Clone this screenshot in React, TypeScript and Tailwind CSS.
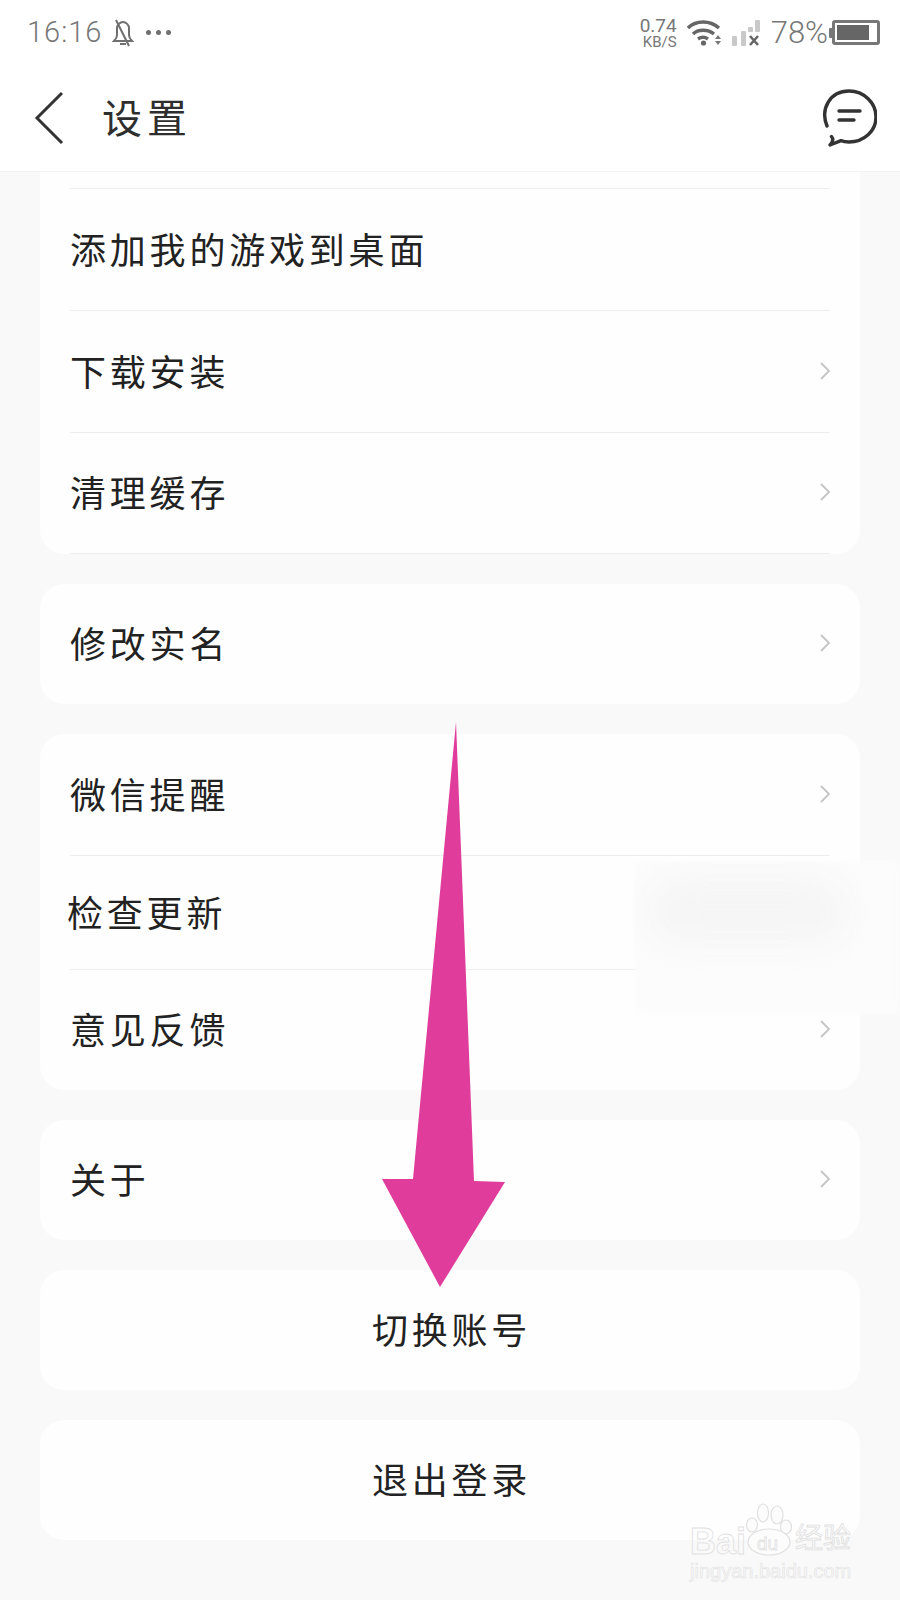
const Chevron = () => (
  <svg width="12" height="20" viewBox="0 0 12 20" fill="none" stroke="#c4c4c4" strokeWidth="1.8" className="mr-[-1px] mb-[2px]">
    <path d="M2 2l8 8-8 8" />
  </svg>
);

const Row = ({ label, arrow = true, top = true, className = "h-[122px]" }: { label: string; arrow?: boolean; top?: boolean; className?: string }) => (
  <div className={`flex items-center justify-between mx-[30px] border-[#ededed] ${top ? "border-t-[1.5px]" : ""} ${className}`}>
    <span className="mb-[4px] text-[36px] tracking-[3.8px] text-[#222]">{label}</span>
    {arrow && <Chevron />}
  </div>
);

const Button = ({ label }: { label: string }) => (
  <div className="h-[120px] bg-[#fefefe] rounded-[24px] flex items-center justify-center">
    <span className="ml-[3px] mb-[4px] text-[36px] tracking-[3.8px] text-[#222]">{label}</span>
  </div>
);

const StatusBar = () => (
  <div className="h-[65px] flex items-center justify-between pl-[27px] pr-[20px] text-[#777] font-['Roboto',sans-serif]">
    <div className="flex items-center">
      <span className="text-[29px] font-light tracking-[1px] leading-none">16:16</span>
      <svg width="22" height="28" viewBox="0 0 22 28" fill="none" stroke="#6f6f6f" strokeWidth="2" className="ml-[10px]">
        <path d="M2 22c2-2 3-3 3-6V9c0-3 3-6 6-6s6 3 6 6v7c0 3 1 4 3 6z" />
        <path d="M8 25h6M4 1l13 26" />
      </svg>
      <div className="flex gap-[5px] ml-[12px]">
        <span className="w-[5px] h-[5px] rounded-full bg-[#6f6f6f]" />
        <span className="w-[5px] h-[5px] rounded-full bg-[#6f6f6f]" />
        <span className="w-[5px] h-[5px] rounded-full bg-[#6f6f6f]" />
      </div>
    </div>
    <div className="flex items-center">
      <div className="flex flex-col items-end gap-[2px]">
        <span className="text-[19px] leading-[17px]">0.74</span>
        <span className="text-[15px] leading-[13px]">KB/S</span>
      </div>
      <svg width="36" height="28" viewBox="0 0 36 28" fill="none" stroke="#666" strokeWidth="3.4" className="ml-[10px]">
        <path d="M1 9c8-8 22-8 31 0" />
        <path d="M6 15c5-5 15-5 21 0" />
        <path d="M11 20c3-2 7-2 10 0" />
        <circle cx="16.5" cy="24" r="2.6" fill="#666" stroke="none" />
        <path d="M31 16l-3 4h6zM31 26l-3-4h6z" fill="#777" stroke="none" />
      </svg>
      <svg width="28" height="26" viewBox="0 0 28 26" className="ml-[9px]">
        <rect x="0" y="16" width="5" height="10" rx="1" fill="#c9c9c9" />
        <rect x="9" y="11" width="5" height="15" rx="1" fill="#c9c9c9" />
        <rect x="16" y="7" width="5" height="5" rx="1" fill="#c9c9c9" />
        <rect x="23" y="0" width="5" height="12" rx="1" fill="#c9c9c9" />
        <path d="M18 16l8 9M26 16l-8 9" stroke="#666" strokeWidth="2.6" />
      </svg>
      <span className="text-[31px] font-light leading-none ml-[11px]">78%</span>
      <div className="flex items-center ml-[1px]">
        <span className="w-[3px] h-[10px] bg-[#777] rounded-l-[1px]" />
        <div className="w-[48px] h-[25px] rounded-[3px] border-[3px] border-[#777] p-[2px]">
          <div className="w-[32px] h-full bg-[#666]" />
        </div>
      </div>
    </div>
  </div>
);

const Watermark = () => (
  <div className="absolute left-[690px] top-[1503px] w-[170px] h-[80px] text-transparent [-webkit-text-stroke:0.8px_#e0e0e0] font-['Liberation_Sans',sans-serif]">
    <span className="absolute left-0 top-[21px] text-[36px] font-bold leading-none">Bai</span>
    <svg width="50" height="54" viewBox="0 0 50 54" fill="#fcfcfc" stroke="#e0e0e0" strokeWidth="1.2" className="absolute left-[55px] top-0">
      <ellipse cx="7" cy="22" rx="5.500" ry="7" />
      <ellipse cx="18" cy="10" rx="5.500" ry="9" />
      <ellipse cx="32" cy="12" rx="6" ry="9" />
      <ellipse cx="41" cy="24" rx="5.500" ry="7" />
      <ellipse cx="24" cy="39" rx="21" ry="13" />
    </svg>
    <span className="absolute left-[67px] top-[31px] text-[19px] leading-none">du</span>
    <span className="absolute left-[105px] top-[19px] text-[28px] leading-none font-['Noto_Sans_CJK_SC',sans-serif]">经验</span>
    <span className="absolute left-0 top-[58px] text-[20px] leading-none whitespace-nowrap [-webkit-text-stroke:0.6px_#e2e2e2]">jingyan.baidu.com</span>
  </div>
);

export default function App() {
  return (
    <div className="relative w-[900px] h-[1600px] overflow-hidden bg-[#f9f9f9] font-['Noto_Sans_CJK_SC',sans-serif]">
      <header className="h-[172px] bg-white border-b border-[#f2f2f2]">
        <StatusBar />
        <div className="h-[105px] flex items-center justify-between pl-[34px] pr-[23px]">
          <div className="flex items-center">
            <svg width="30" height="54" viewBox="0 0 30 54" fill="none" stroke="#333" strokeWidth="3">
              <path d="M28 2L3 27l25 25" />
            </svg>
            <span className="ml-[38px] mb-[4px] text-[40px] tracking-[5px] text-[#2e2e2e]">设置</span>
          </div>
          <svg width="56" height="58" viewBox="0 0 56 58" fill="none" stroke="#333" strokeWidth="3.4" strokeLinecap="round" strokeLinejoin="round">
            <path d="M6 37C-1 20 9 2 28 2c15 0 27 12 27 26S43 53 28 53c-3 0-6-.5-8-1.300L9 56c3-3 3.500-6 1.500-8.500" />
            <path d="M18 22h21M18 31h15" />
          </svg>
        </div>
      </header>

      <main className="flex flex-col gap-[30px] px-[40px]">
        <section className="bg-[#fefefe] rounded-b-[24px] pt-[16px] h-[382px]">
          <Row label="添加我的游戏到桌面" arrow={false} />
          <Row label="下载安装" />
          <Row label="清理缓存" className="h-[122px] border-b-[1.5px]" />
        </section>
        <section className="bg-[#fefefe] rounded-[24px]">
          <Row label="修改实名" top={false} className="h-[120px]" />
        </section>
        <section className="bg-[#fefefe] rounded-[24px]">
          <Row label="微信提醒" top={false} className="h-[121px]" />
          <div className="flex items-center mx-[30px] h-[114px] border-t-[1.5px] border-[#ededed]">
            <span className="-ml-[3px] mb-[4px] text-[36px] tracking-[3.8px] text-[#222]">检查更新</span>
          </div>
          <Row label="意见反馈" className="h-[121px]" />
        </section>
        <section className="bg-[#fefefe] rounded-[24px]">
          <Row label="关于" top={false} className="h-[120px]" />
        </section>
        <Button label="切换账号" />
        <Button label="退出登录" />
      </main>

      {/* smudged patch from the screenshot's editor */}
      <div className="absolute left-[633px] top-[860px] w-[267px] h-[155px] overflow-hidden">
        <div className="absolute inset-0 bg-[#fcfcfc] blur-[4px]" />
        <div className="absolute left-[14px] top-[18px] w-[200px] h-[66px] rounded-full bg-[#f5f5f5] blur-[16px]" />
      </div>

      <svg width="900" height="1600" viewBox="0 0 900 1600" className="absolute left-0 top-0 pointer-events-none">
        <polygon points="456,722 413,1179 382,1179 440,1287 505,1182 474,1181" fill="#e03c9c" />
      </svg>

      <Watermark />
    </div>
  );
}
